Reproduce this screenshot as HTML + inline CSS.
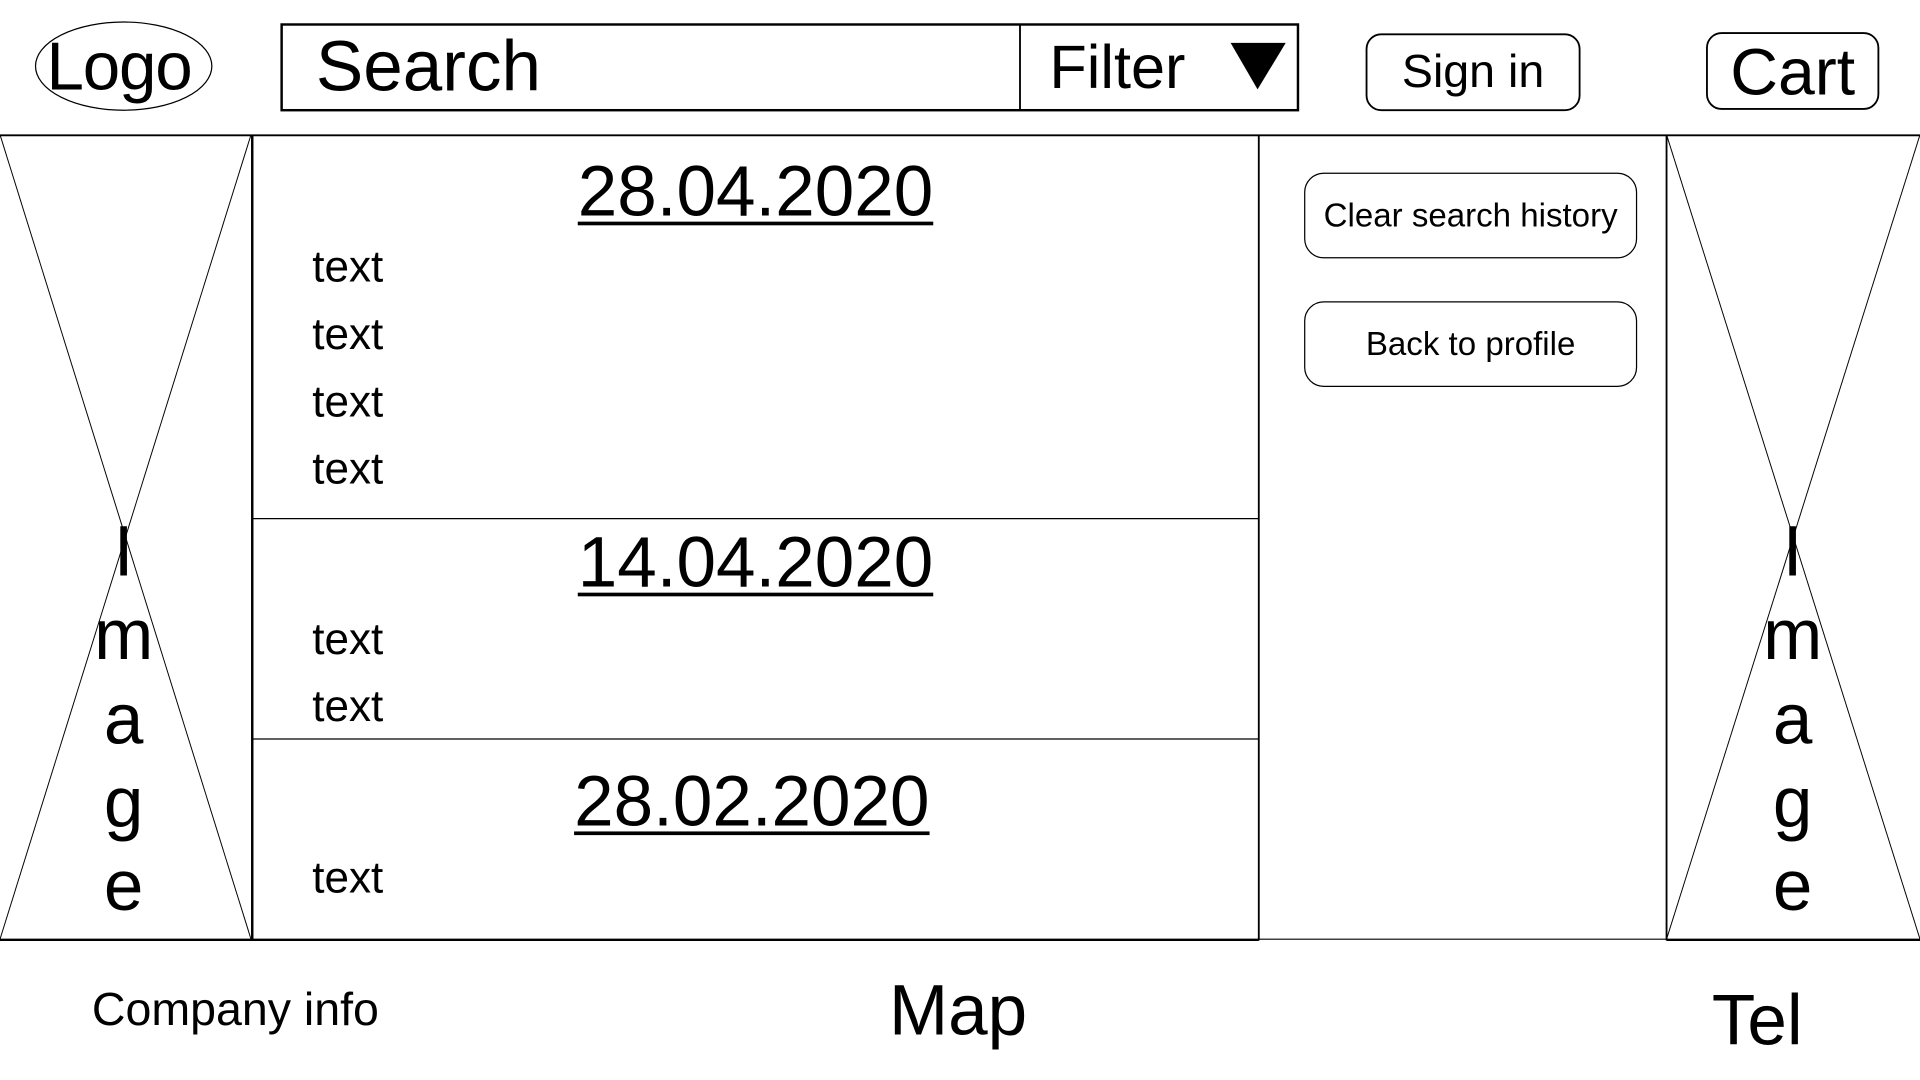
<!DOCTYPE html>
<html><head><meta charset="utf-8"><style>
html,body{margin:0;padding:0;background:#fff;overflow:hidden;width:1920px;height:1080px}
#w{position:absolute;left:0;top:0;width:1568px;height:882px;transform:scale(1.2245);transform-origin:0 0;font-family:"Liberation Sans",Roboto,sans-serif;color:#000}
.a{position:absolute;white-space:nowrap}
.t{position:absolute;left:255px;font-size:36px;line-height:36px}
.d{position:absolute;left:206px;width:822px;text-align:center;font-size:58px;line-height:58px;text-decoration:underline;text-decoration-thickness:3px;text-underline-offset:5px}
.btn{position:absolute;left:1065px;width:272px;border:1.5px solid #000;border-radius:16px;font-size:27px;display:flex;align-items:center;justify-content:center;box-sizing:border-box}
.L{position:absolute;width:60px;text-align:center;font-size:58px;line-height:58px}
</style></head><body><div id="w">
<svg class="a" style="left:0;top:0" width="1568" height="882">
<ellipse cx="101" cy="54" rx="72" ry="36" fill="none" stroke="#000" stroke-width="1"/>
<rect x="230" y="20" width="830" height="70" fill="none" stroke="#000" stroke-width="2"/>
<line x1="833" y1="20" x2="833" y2="90" stroke="#000" stroke-width="1.5"/>
<polygon points="1005,35 1050,35 1027,73" fill="#000"/>
<rect x="1116" y="28" width="174" height="62" rx="12" fill="none" stroke="#000" stroke-width="1.5"/>
<rect x="1394" y="27" width="140" height="62" rx="12" fill="none" stroke="#000" stroke-width="1.5"/>
<line x1="0" y1="110.5" x2="1568" y2="110.5" stroke="#000" stroke-width="1.5"/>
<line x1="0" y1="110" x2="205" y2="767" stroke="#000" stroke-width="0.8"/>
<line x1="205" y1="110" x2="0" y2="767" stroke="#000" stroke-width="0.8"/>
<line x1="1361" y1="110" x2="1568" y2="767" stroke="#000" stroke-width="0.8"/>
<line x1="1568" y1="110" x2="1361" y2="767" stroke="#000" stroke-width="0.8"/>
<line x1="206" y1="110" x2="206" y2="768" stroke="#000" stroke-width="2"/>
<line x1="1028" y1="110" x2="1028" y2="768" stroke="#000" stroke-width="1.5"/>
<line x1="1361" y1="110" x2="1361" y2="768" stroke="#000" stroke-width="1.5"/>
<line x1="206" y1="423.5" x2="1028" y2="423.5" stroke="#000" stroke-width="1"/>
<line x1="206" y1="603.5" x2="1028" y2="603.5" stroke="#000" stroke-width="1"/>
<line x1="0" y1="767.5" x2="1028" y2="767.5" stroke="#000" stroke-width="2"/>
<line x1="1028" y1="767" x2="1361" y2="767" stroke="#000" stroke-width="1"/>
<line x1="1361" y1="767.5" x2="1568" y2="767.5" stroke="#000" stroke-width="2"/>
</svg>
<div class="a" style="left:38px;top:25px;font-size:55px;line-height:58px;letter-spacing:-1px">Logo</div>
<div class="a" style="left:258px;top:24px;font-size:58px;line-height:62px">Search</div>
<div class="a" style="left:857px;top:27px;font-size:50px;line-height:56px">Filter</div>
<div class="a" style="left:1116px;top:38px;width:174px;text-align:center;font-size:38px;line-height:42px">Sign in</div>
<div class="a" style="left:1394px;top:30px;width:140px;text-align:center;font-size:54px;line-height:58px">Cart</div>
<div class="d" style="top:128px">28.04.2020</div>
<div class="t" style="top:200px">text</div>
<div class="t" style="top:255px">text</div>
<div class="t" style="top:310px">text</div>
<div class="t" style="top:365px">text</div>
<div class="d" style="top:431px">14.04.2020</div>
<div class="t" style="top:504px">text</div>
<div class="t" style="top:559px">text</div>
<div class="d" style="top:626px;left:203px">28.02.2020</div>
<div class="t" style="top:699px">text</div>
<div class="btn" style="top:141px;height:70px">Clear search history</div>
<div class="btn" style="top:246px;height:70px">Back to profile</div>
<div class="L" style="left:71px;top:422px">I</div>
<div class="L" style="left:71px;top:490px">m</div>
<div class="L" style="left:71px;top:559px">a</div>
<div class="L" style="left:71px;top:627px">g</div>
<div class="L" style="left:71px;top:695px">e</div>
<div class="L" style="left:1434px;top:422px">I</div>
<div class="L" style="left:1434px;top:490px">m</div>
<div class="L" style="left:1434px;top:559px">a</div>
<div class="L" style="left:1434px;top:627px">g</div>
<div class="L" style="left:1434px;top:695px">e</div>
<div class="a" style="left:75px;top:804px;font-size:38px;line-height:42px">Company info</div>
<div class="a" style="left:726px;top:795px;font-size:58px;line-height:62px">Map</div>
<div class="a" style="left:1398px;top:803px;font-size:58px;line-height:62px">Tel</div>
</div></body></html>
